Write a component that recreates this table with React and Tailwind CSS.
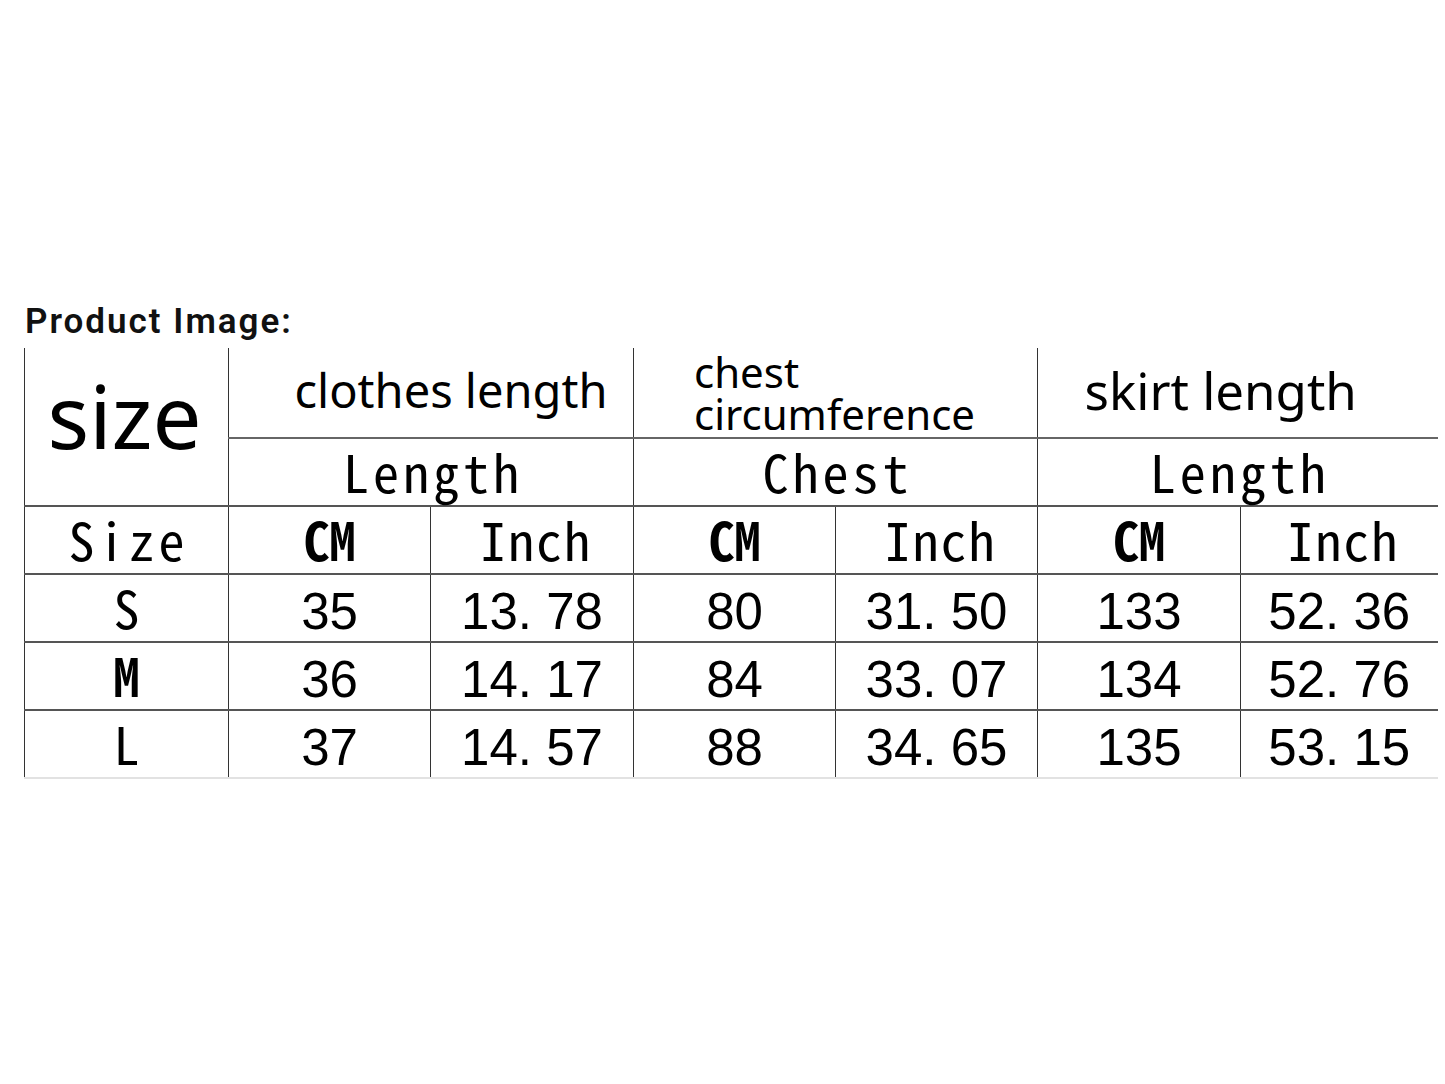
import React from 'react';

const rows = [
  ['S', '35', '13. 78', '80', '31. 50', '133', '52. 36'],
  ['M', '36', '14. 17', '84', '33. 07', '134', '52. 76'],
  ['L', '37', '14. 57', '88', '34. 65', '135', '53. 15'],
];

const mono = "font-['Noto_Sans_Mono_CJK_SC','Liberation_Mono',monospace] text-[52px] leading-none text-black";
const spaced = `${mono} tracking-[4px] -mr-[4px]`;
const inch = `${mono} tracking-[2px] -mr-[2px] relative left-[3px]`;
const digits = "font-['Liberation_Sans',Arial,sans-serif] text-[51px] leading-none text-black relative top-[3px]";
const vline = 'border-l border-l-[#333]';
const hline = 'border-b-2 border-b-[#555]';

export default function App() {
  return (
    <div className="w-[1445px] h-[1084px] bg-white pt-[301px]">
      <p className="pl-[25px] font-['Roboto',sans-serif] font-semibold text-[35px] leading-[42px] tracking-[2px] text-[#111]">
        Product Image:
      </p>
      <table className="ml-[24px] mt-[5px] table-fixed border-collapse">
        <colgroup>
          <col className="w-[204px]" />
          <col className="w-[202px]" />
          <col className="w-[203px]" />
          <col className="w-[202px]" />
          <col className="w-[202px]" />
          <col className="w-[203px]" />
          <col className="w-[197px]" />
        </colgroup>
        <tbody>
          <tr className="h-[90px]">
            <td rowSpan={2} className={`${vline} ${hline} text-center align-middle`}>
              <span className="font-['Noto_Sans',sans-serif] text-[87px] leading-none text-black relative top-[-11px] -left-[2px]">size</span>
            </td>
            <td colSpan={2} className={`${vline} border-b-2 border-b-[#666] text-center align-middle pl-10`}>
              <span className="font-['Noto_Sans',sans-serif] text-[47px] leading-none text-black relative -top-[2px]">clothes length</span>
            </td>
            <td colSpan={2} className={`${vline} border-b-2 border-b-[#666] align-middle pl-[60px]`}>
              <div className="flex flex-col font-['Noto_Sans',sans-serif] text-[42px] leading-[42px] text-black">
                <span>chest</span>
                <span>circumference</span>
              </div>
            </td>
            <td colSpan={2} className={`${vline} border-b-2 border-b-[#666] text-center align-middle pr-[34px]`}>
              <span className="font-['Noto_Sans',sans-serif] text-[51px] leading-none text-black relative -top-[2px]">skirt length</span>
            </td>
          </tr>
          <tr className="h-[68px]">
            <td colSpan={2} className={`${vline} ${hline} text-center align-middle`}>
              <span className={spaced}>Length</span>
            </td>
            <td colSpan={2} className={`${vline} ${hline} text-center align-middle`}>
              <span className={spaced}>Chest</span>
            </td>
            <td colSpan={2} className={`${vline} ${hline} text-center align-middle`}>
              <span className={spaced}>Length</span>
            </td>
          </tr>
          <tr className="h-[68px]">
            {['Size', 'CM', 'Inch', 'CM', 'Inch', 'CM', 'Inch'].map((t, i) => (
              <td key={i} className={`${vline} ${hline} text-center align-middle`}>
                {t === 'CM' ? (
                  <span className={`${mono} font-bold`}>{t}</span>
                ) : (
                  <span className={t === 'Inch' ? inch : spaced}>{t}</span>
                )}
              </td>
            ))}
          </tr>
          {rows.map((r, ri) => (
            <tr key={r[0]} className="h-[68px]">
              {r.map((t, i) => (
                <td
                  key={i}
                  className={`${vline} ${ri === rows.length - 1 ? 'border-b-2 border-b-[#e2e2e2]' : hline} text-center align-middle`}
                >
                  {i === 0 ? (
                    <span className={`${mono} ${t === 'M' ? 'font-bold' : ''}`}>{t}</span>
                  ) : (
                    <span className={`${digits} whitespace-pre`}>{t}</span>
                  )}
                </td>
              ))}
            </tr>
          ))}
        </tbody>
      </table>
    </div>
  );
}
